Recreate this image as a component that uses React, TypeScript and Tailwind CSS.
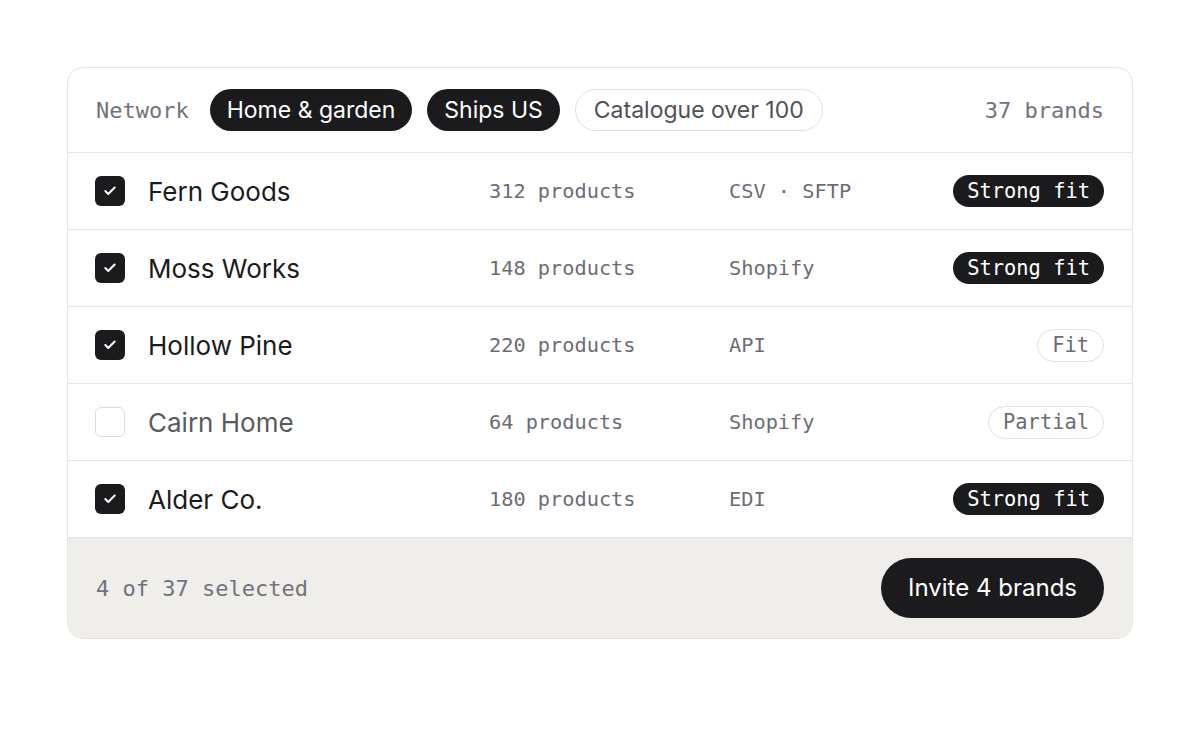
import { Check } from 'lucide-react';

type Brand = {
  name: string;
  products: string;
  feed: string;
  fit: 'Strong fit' | 'Fit' | 'Partial';
  selected: boolean;
};

const brands: Brand[] = [
  { name: 'Fern Goods', products: '312 products', feed: 'CSV · SFTP', fit: 'Strong fit', selected: true },
  { name: 'Moss Works', products: '148 products', feed: 'Shopify', fit: 'Strong fit', selected: true },
  { name: 'Hollow Pine', products: '220 products', feed: 'API', fit: 'Fit', selected: true },
  { name: 'Cairn Home', products: '64 products', feed: 'Shopify', fit: 'Partial', selected: false },
  { name: 'Alder Co.', products: '180 products', feed: 'EDI', fit: 'Strong fit', selected: true }
];

const mono = "font-['DejaVu_Sans_Mono','Liberation_Mono',monospace]";
const sans = "font-['Inter','Noto_Sans',sans-serif]";

function FitBadge({ fit }: { fit: Brand['fit'] }) {
  if (fit === 'Strong fit') {
    return (
      <span className={`${mono} inline-flex h-[32px] items-center rounded-full bg-[#1b1b1d] px-[14px] text-[20.4px] text-white`}>
        {fit}
      </span>
    );
  }
  return (
    <span className={`${mono} inline-flex h-[33px] items-center rounded-full border border-[#e2e2e2] px-[14px] text-[20.4px] text-[#6c6c76]`}>
      {fit}
    </span>
  );
}

export default function App() {
  const selectedCount = brands.filter((b) => b.selected).length;

  return (
    <div className={`${sans} min-h-[750px] w-full bg-white pt-[67px]`}>
      <div className="mx-auto w-[1066px] overflow-hidden rounded-[16px] border border-[#e4e4e4] bg-white">
        {/* filters */}
        <div className="flex h-[85px] items-center border-b border-[#e6e6e6] px-[28px]">
          <span className={`${mono} text-[22px] text-[#72727c]`}>Network</span>
          <div className="ml-[21px] flex items-center gap-[15px]">
            <span className="inline-flex h-[42px] items-center rounded-full bg-[#1b1b1d] px-[17px] text-[23px] text-white">
              Home &amp; garden
            </span>
            <span className="inline-flex h-[42px] items-center rounded-full bg-[#1b1b1d] px-[17px] text-[23px] text-white">
              Ships US
            </span>
            <span className="inline-flex h-[42px] items-center rounded-full border border-[#e0e0e0] px-[18px] text-[23px] text-[#505055]">
              Catalogue over 100
            </span>
          </div>
          <span className={`${mono} ml-auto text-[22px] text-[#72727c]`}>37 brands</span>
        </div>

        {/* rows */}
        {brands.map((b) => (
          <div
            key={b.name}
            className="grid h-[77px] grid-cols-[393px_240px_1fr_auto] items-center border-b border-[#e6e6e6] px-[28px]"
          >
            <div className="flex items-center gap-[23px]">
              {b.selected ? (
                <span className="-ml-px flex h-[30px] w-[30px] items-center justify-center rounded-[6px] bg-[#1b1b1d] text-white">
                  <Check size={14} strokeWidth={3.5} />
                </span>
              ) : (
                <span className="-ml-px h-[30px] w-[30px] rounded-[6px] border border-[#dcdcdc] bg-white" />
              )}
              <span className={`text-[26px] ${b.selected ? 'text-[#1b1b1d]' : 'text-[#5a5a5e]'}`}>{b.name}</span>
            </div>
            <span className={`${mono} text-[20.3px] text-[#6c6c76]`}>{b.products}</span>
            <span className={`${mono} text-[20.3px] text-[#6c6c76]`}>{b.feed}</span>
            <FitBadge fit={b.fit} />
          </div>
        ))}

        {/* footer */}
        <div className="flex h-[100px] items-center justify-between bg-[#efeeeb] px-[28px]">
          <span className={`${mono} text-[22px] text-[#72727c]`}>
            {selectedCount} of 37 selected
          </span>
          <button className="h-[60px] rounded-full bg-[#1b1b1d] px-[27px] text-[24px] text-white">
            Invite {selectedCount} brands
          </button>
        </div>
      </div>
    </div>
  );
}
